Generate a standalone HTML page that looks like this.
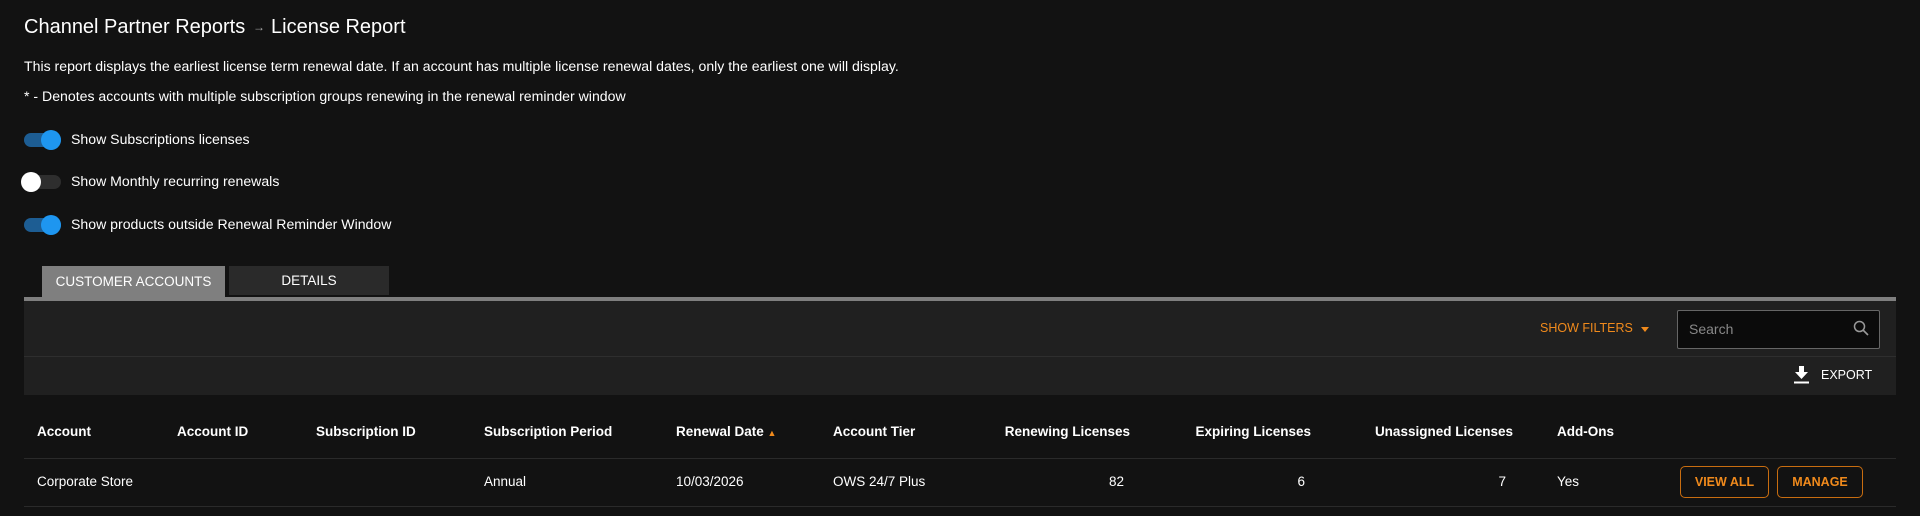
<!DOCTYPE html>
<html><head><meta charset="utf-8"><style>
*{margin:0;padding:0;box-sizing:border-box}
body{width:1920px;height:516px;background:#121212;color:#fff;font-family:"Liberation Sans",Arial,sans-serif;position:relative;overflow:hidden}
.a{position:absolute;white-space:nowrap}
.tog{position:absolute;left:24px;width:37px;height:14px;border-radius:7px}
.knob{position:absolute;top:-3px;width:20px;height:20px;border-radius:50%}
.h{font-weight:bold;font-size:13.5px;top:424px}
.c{font-size:13.5px;top:474px}
.btn{position:absolute;top:466px;height:32px;border:1px solid #c86d10;border-radius:5px;color:#f08a1c;font-weight:bold;font-size:12.5px;display:flex;align-items:center;justify-content:center}
</style></head><body>
<div class="a" style="left:24px;top:16px;font-size:20px">Channel Partner Reports</div>
<div class="a" style="left:253px;top:20px;font-size:12px;color:#aaa">→</div>
<div class="a" style="left:271px;top:16px;font-size:20px">License Report</div>
<div class="a" style="left:24px;top:58px;font-size:14.1px">This report displays the earliest license term renewal date. If an account has multiple license renewal dates, only the earliest one will display.</div>
<div class="a" style="left:24px;top:88px;font-size:14.1px">* - Denotes accounts with multiple subscription groups renewing in the renewal reminder window</div>

<div class="tog" style="top:133px;background:#1d5d93"><div class="knob" style="left:17px;background:#1e96f0"></div></div>
<div class="a" style="left:71px;top:131px;font-size:14.1px">Show Subscriptions licenses</div>
<div class="tog" style="top:175px;background:#2e2e2e"><div class="knob" style="left:-3px;background:#fff"></div></div>
<div class="a" style="left:71px;top:173px;font-size:14.1px">Show Monthly recurring renewals</div>
<div class="tog" style="top:218px;background:#1d5d93"><div class="knob" style="left:17px;background:#1e96f0"></div></div>
<div class="a" style="left:71px;top:216px;font-size:14.1px">Show products outside Renewal Reminder Window</div>

<div class="a" style="left:42px;top:266px;width:183px;height:31px;background:#7f7f7f;font-size:13.5px;display:flex;align-items:center;justify-content:center">CUSTOMER ACCOUNTS</div>
<div class="a" style="left:229px;top:266px;width:160px;height:29px;background:#2a2a2a;font-size:13.5px;display:flex;align-items:center;justify-content:center">DETAILS</div>
<div class="a" style="left:24px;top:297px;width:1872px;height:4px;background:#7f7f7f"></div>
<div class="a" style="left:24px;top:301px;width:1872px;height:56px;background:#202020;border-bottom:1px solid #2e2e2e"></div>
<div class="a" style="left:24px;top:357px;width:1872px;height:38px;background:#202020"></div>
<div class="a" style="left:1540px;top:321px;font-size:12.5px;color:#f08a1c">SHOW FILTERS</div>
<div class="a" style="left:1641px;top:327px;width:0;height:0;border-left:4px solid transparent;border-right:4px solid transparent;border-top:5px solid #f08a1c"></div>
<div class="a" style="left:1677px;top:310px;width:203px;height:39px;background:#0b0b0b;border:1px solid #666;border-radius:2px"></div>
<div class="a" style="left:1689px;top:321px;font-size:14px;color:#888">Search</div>
<svg class="a" style="left:1853px;top:320px" width="16" height="16" viewBox="0 0 16 16"><circle cx="6.5" cy="6.5" r="5" fill="none" stroke="#999" stroke-width="1.5"/><line x1="10" y1="10" x2="15" y2="15" stroke="#999" stroke-width="1.6"/></svg>
<svg class="a" style="left:1794px;top:366px" width="15" height="18" viewBox="0 0 15 18"><path d="M5 0h5v6h4l-6.5 7L1 6h4z" fill="#fff"/><rect x="0" y="15.5" width="15" height="2" fill="#fff"/></svg>
<div class="a" style="left:1821px;top:368px;font-size:12.5px">EXPORT</div>

<div class="a h" style="left:37px">Account</div>
<div class="a h" style="left:177px">Account ID</div>
<div class="a h" style="left:316px">Subscription ID</div>
<div class="a h" style="left:484px">Subscription Period</div>
<div class="a h" style="left:676px">Renewal Date <span style="color:#f08a1c;font-size:9px">▲</span></div>
<div class="a h" style="left:833px">Account Tier</div>
<div class="a h" style="right:790px">Renewing Licenses</div>
<div class="a h" style="right:609px">Expiring Licenses</div>
<div class="a h" style="right:407px">Unassigned Licenses</div>
<div class="a h" style="left:1557px">Add-Ons</div>
<div class="a" style="left:24px;top:458px;width:1872px;height:1px;background:#2a2a2a"></div>
<div class="a c" style="left:37px">Corporate Store</div>
<div class="a c" style="left:484px">Annual</div>
<div class="a c" style="left:676px">10/03/2026</div>
<div class="a c" style="left:833px">OWS 24/7 Plus</div>
<div class="a c" style="right:796px">82</div>
<div class="a c" style="right:615px">6</div>
<div class="a c" style="right:414px">7</div>
<div class="a c" style="left:1557px">Yes</div>
<div class="btn" style="left:1680px;width:89px">VIEW ALL</div>
<div class="btn" style="left:1777px;width:86px">MANAGE</div>
<div class="a" style="left:24px;top:506px;width:1872px;height:1px;background:#2a2a2a"></div>
</body></html>
